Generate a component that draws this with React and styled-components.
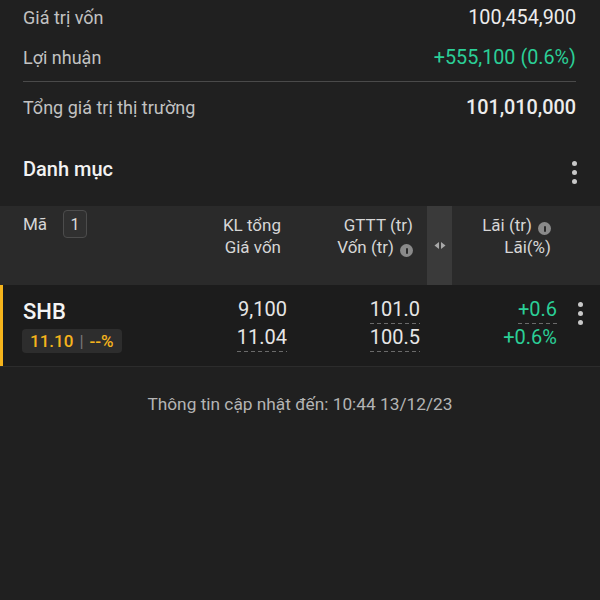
import React from "react";
import styled, { createGlobalStyle } from "styled-components";

const GlobalStyle = createGlobalStyle`
  body {
    margin: 0;
    background: #202020;
    font-family: Roboto, "Noto Sans", sans-serif;
    color: #ececec;
  }
`;

const Page = styled.div`
  width: 600px;
  height: 600px;
  overflow: hidden;
  background: #202020;
`;

const Summary = styled.div`
  margin-top: -3px;
  padding: 0 24px 0 23px;
`;

const SumRow = styled.div`
  height: 40px;
  display: flex;
  align-items: center;
  justify-content: space-between;
  margin-top: ${({ $gap }) => $gap || 0}px;
`;

const SumLabel = styled.span`
  font-size: 18px;
  color: #c2c2c2;
`;

const SumValue = styled.span`
  font-size: 19.8px;
  font-weight: ${({ $bold }) => ($bold ? 500 : 400)};
  color: ${({ $green }) => ($green ? "#2bcf97" : "#ececec")};
`;

const Rule = styled.div`
  height: 1px;
  margin: 4px 0 0;
  background: #4a4a4a;
`;

const SectionHead = styled.div`
  margin: 14px 0 9px;
  height: 56px;
  padding: 0 23px 0 23px;
  display: flex;
  align-items: center;
  justify-content: space-between;
`;

const SectionTitle = styled.h2`
  margin: 0;
  font-size: 20px;
  font-weight: 500;
  color: #f2f2f2;
`;

const Dots = styled.div`
  display: flex;
  flex-direction: column;
  gap: 4px;
  margin-top: ${({ $shift }) => $shift || 0}px;
  span {
    width: 5px;
    height: 5px;
    border-radius: 50%;
    background: #c8c8c8;
  }
`;

const Kebab = ({ shift }) => (
  <Dots $shift={shift}>
    <span />
    <span />
    <span />
  </Dots>
);

const cols = "190px 100px 137px 25px 110px 38px";

const HeadBand = styled.div`
  display: grid;
  grid-template-columns: ${cols};
  height: 79px;
  background: #2a2a2a;
`;

const HeadCell = styled.div`
  padding-top: 8px;
  padding-right: ${({ $pr }) => $pr || 0}px;
  text-align: right;
  font-size: 17px;
  line-height: 22px;
  color: #d6d6d6;
`;

const CodeHead = styled.div`
  padding: 4px 0 0 23px;
  display: flex;
  align-items: center;
  gap: 16px;
  height: 28px;
  font-size: 17px;
  color: #d6d6d6;
`;

const CountBox = styled.span`
  width: 22px;
  height: 26px;
  border: 1px solid #4c4c4c;
  border-radius: 4px;
  background: #303030;
  display: flex;
  align-items: center;
  justify-content: center;
  font-size: 16px;
  color: #dcdcdc;
`;

const Splitter = styled.div`
  background: #3a3a3a;
  display: flex;
  align-items: center;
  justify-content: center;
`;

const InfoDot = styled.span`
  display: inline-flex;
  align-items: center;
  justify-content: center;
  width: 13px;
  height: 13px;
  margin-left: 6px;
  border-radius: 50%;
  background: #8a8a8a;
  vertical-align: -1px;
  &::before {
    content: "";
    width: 2px;
    height: 6px;
    margin-top: 2px;
    background: #2a2a2a;
    border-radius: 1px;
  }
`;

const Row = styled.div`
  display: grid;
  grid-template-columns: ${cols};
  height: 81px;
  background: #1c1c1c;
  box-shadow: inset 3px 0 0 #f5b41c;
  border-bottom: 1px solid #2c2c2c;
`;

const CodeCell = styled.div`
  padding: 13px 0 0 23px;
`;

const Ticker = styled.div`
  height: 28px;
  line-height: 28px;
  font-size: 22px;
  font-weight: 500;
  color: #f4f4f4;
`;

const PriceTag = styled.div`
  display: inline-flex;
  align-items: center;
  gap: 6px;
  margin-top: 3px;
  height: 24px;
  padding: 0 8px;
  margin-left: -1px;
  border-radius: 4px;
  background: #2d2d2d;
  font-size: 17px;
  font-weight: 500;
  color: #f5b41c;
  i {
    font-style: normal;
    font-weight: 400;
    color: #777;
  }
`;

const ValCell = styled.div`
  padding-top: 11px;
  padding-right: ${({ $pr }) => $pr || 0}px;
  display: flex;
  flex-direction: column;
  align-items: flex-end;
`;

const Num = styled.span`
  display: inline-block;
  height: 28px;
  line-height: 27px;
  font-size: 20px;
  color: ${({ $green }) => ($green ? "#2bcf97" : "#e6e6e6")};
  background-image: ${({ $dashed }) =>
    $dashed
      ? "repeating-linear-gradient(90deg, #6a6a6a 0 4px, transparent 4px 7px)"
      : "none"};
  background-size: 100% 1px;
  background-position: 0 100%;
  background-repeat: no-repeat;
`;

const MenuCell = styled.div`
  padding-top: 17px;
  padding-right: 2px;
  display: flex;
  justify-content: center;
`;

const Footer = styled.div`
  margin-top: 25px;
  line-height: 24px;
  text-align: center;
  font-size: 17.3px;
  color: #b4b4b4;
`;

const SplitIcon = () => (
  <svg width="12" height="7" viewBox="0 0 12 7">
    <path d="M5 0 L0.5 3.5 L5 7 Z" fill="#a8a8a8" />
    <path d="M7 0 L11.5 3.5 L7 7 Z" fill="#a8a8a8" />
  </svg>
);

export default function App() {
  return (
    <Page>
      <GlobalStyle />
      <Summary>
        <SumRow>
          <SumLabel>Giá trị vốn</SumLabel>
          <SumValue>100,454,900</SumValue>
        </SumRow>
        <SumRow>
          <SumLabel>Lợi nhuận</SumLabel>
          <SumValue $green>+555,100 (0.6%)</SumValue>
        </SumRow>
        <Rule />
        <SumRow $gap={5}>
          <SumLabel>Tổng giá trị thị trường</SumLabel>
          <SumValue $bold>101,010,000</SumValue>
        </SumRow>
      </Summary>

      <SectionHead>
        <SectionTitle>Danh mục</SectionTitle>
        <Kebab shift={6} />
      </SectionHead>

      <HeadBand>
        <CodeHead>
          <span>Mã</span>
          <CountBox>1</CountBox>
        </CodeHead>
        <HeadCell $pr={9}>
          KL tổng
          <br />
          Giá vốn
        </HeadCell>
        <HeadCell $pr={14}>
          GTTT (tr)
          <br />
          Vốn (tr)
          <InfoDot />
        </HeadCell>
        <Splitter>
          <SplitIcon />
        </Splitter>
        <HeadCell $pr={11}>
          Lãi (tr)
          <InfoDot />
          <br />
          Lãi(%)
        </HeadCell>
        <div />
      </HeadBand>

      <Row>
        <CodeCell>
          <Ticker>SHB</Ticker>
          <PriceTag>
            11.10 <i>|</i> --%
          </PriceTag>
        </CodeCell>
        <ValCell $pr={3}>
          <Num>9,100</Num>
          <Num $dashed>11.04</Num>
        </ValCell>
        <ValCell $pr={7}>
          <Num $dashed>101.0</Num>
          <Num $dashed>100.5</Num>
        </ValCell>
        <div />
        <ValCell $pr={5}>
          <Num $green $dashed>
            +0.6
          </Num>
          <Num $green>+0.6%</Num>
        </ValCell>
        <MenuCell>
          <Kebab />
        </MenuCell>
      </Row>

      <Footer>Thông tin cập nhật đến: 10:44 13/12/23</Footer>
    </Page>
  );
}
